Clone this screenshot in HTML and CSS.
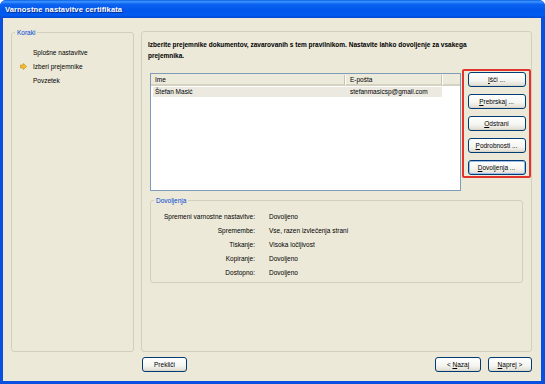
FILE: index.html
```html
<!DOCTYPE html>
<html lang="sl">
<head>
    <meta charset="UTF-8">
    <title>Varnostne nastavitve certifikata</title>
    <link rel="stylesheet" href="styles.css">
</head>
<body>

<div class="window">
    <div class="titlebar">Varnostne nastavitve certifikata</div>

    <div class="client">
        <div class="panes">
            <fieldset class="steps">
                <legend>Koraki</legend>
                <ul>
                    <li><span class="mark"></span>Splošne nastavitve</li>
                    <li class="current">
                        <span class="mark">
                            <svg width="7" height="7" viewBox="0 0 8 8">
                                <path d="M0.5 2.4 H3.8 V0.6 L7.5 4 L3.8 7.4 V5.6 H0.5 Z" fill="#f7c032" stroke="#c98d12" stroke-width="0.8"/>
                            </svg>
                        </span>Izberi prejemnike
                    </li>
                    <li><span class="mark"></span>Povzetek</li>
                </ul>
            </fieldset>

            <div class="page">
                <p class="intro">Izberite prejemnike dokumentov, zavarovanih s tem pravilnikom. Nastavite lahko dovoljenje za vsakega<br>prejemnika.</p>

                <div class="recipients">
                    <div class="list">
                        <div class="list-head">
                            <span>Ime</span>
                            <span>E-pošta</span>
                            <span></span>
                        </div>
                        <div class="list-row">
                            <span>Štefan Masić</span>
                            <span>stefanmasicsp@gmail.com</span>
                        </div>
                    </div>

                    <div class="actions">
                        <button><u>I</u>šči ...</button>
                        <button><u>P</u>rebrskaj ...</button>
                        <button><u>O</u>dstrani</button>
                        <button><u>P</u>odrobnosti ...</button>
                        <button class="focused"><u>D</u>ovoljenja ...</button>
                    </div>
                </div>

                <fieldset class="perms">
                    <legend>Dovoljenja</legend>
                    <div class="perm-grid">
                        <span>Spremeni varnostne nastavitve:</span><span>Dovoljeno</span>
                        <span>Spremembe:</span><span>Vse, razen izvlečenja strani</span>
                        <span>Tiskanje:</span><span>Visoka ločljivost</span>
                        <span>Kopiranje:</span><span>Dovoljeno</span>
                        <span>Dostopno:</span><span>Dovoljeno</span>
                    </div>
                </fieldset>
            </div>
        </div>

        <div class="footer">
            <button class="cancel">Prekliči</button>
            <div class="nav">
                <button class="back">&lt; <u>N</u>azaj</button>
                <button class="next"><u>N</u>aprej &gt;</button>
            </div>
        </div>
    </div>
</div>

</body>
</html>
```

FILE: styles.css
```css
html, body {
    margin: 0;
    padding: 0;
}
body {
    width: 545px;
    height: 384px;
    overflow: hidden;
    background-color: #ffffff;
    font-family: "Liberation Sans", Arial, sans-serif;
    font-size: 6.5px;
    color: #000;
}
.window {
    width: 545px;
    height: 384px;
    display: flex;
    flex-direction: column;
    background-color: #0a50e0;
    border-radius: 6px 6px 0 0;
    overflow: hidden;
}
.titlebar {
    flex: none;
    height: 18px;
    padding-left: 5px;
    display: flex;
    align-items: center;
    color: #fff;
    font-weight: bold;
    font-size: 7.6px;
    letter-spacing: 0.1px;
    text-shadow: 1px 1px #0b2a8a;
    background: linear-gradient(to bottom, #0b5fe8 0%, #3f97ff 10%, #0c64f2 22%, #0056ea 55%, #005bf0 85%, #0046cf 100%);
}
.client {
    flex: none;
    height: 363px;
    margin: 0 4px 3px 3px;
    background-color: #ece9d8;
    display: flex;
    flex-direction: column;
}

/* panes */
.panes {
    display: flex;
    gap: 7px;
    height: 324px;
    padding: 10px 9px 0 8px;
}
fieldset {
    margin: 0;
    padding: 0;
    border: 1px solid #d0d0bf;
    border-radius: 3px;
    min-width: 0;
}
legend {
    padding: 0 2px;
    margin-left: 3px;
    line-height: 9px;
    color: #0046d5;
}
.steps {
    width: 123px;
    box-sizing: border-box;
}
.steps ul {
    list-style: none;
    margin: 8px 0 0 0;
    padding: 0;
}
.steps li {
    display: flex;
    align-items: center;
    height: 14px;
}
.steps .mark {
    width: 21px;
    flex: none;
    display: flex;
    align-items: center;
}
.steps .mark svg {
    margin-left: 8px;
}

.page {
    flex: 1;
    margin-top: 3px;
    border: 1px solid #d0d0bf;
    border-radius: 3px;
}
.intro {
    margin: 0;
    padding: 7px 6px 0 6px;
    line-height: 11px;
    font-weight: bold;
    white-space: nowrap;
}

/* recipients */
.recipients {
    display: flex;
    align-items: flex-start;
    margin-top: 8px;
}
.list {
    width: 311px;
    height: 118px;
    margin: 4px 0 0 8px;
    box-sizing: border-box;
    border: 1px solid #7f9db9;
    background-color: #fff;
}
.list-head {
    display: grid;
    grid-template-columns: 194px 97px 1fr;
    height: 12px;
    box-sizing: border-box;
    background-color: #ebeadb;
    border-bottom: 2px solid #d6d2c2;
    line-height: 10px;
}
.list-head span {
    padding-left: 4px;
    border-right: 1px solid #c7c5b2;
    box-shadow: 1px 0 0 #fff;
    margin: 1px 0;
}
.list-head span:nth-child(2) {
    padding-left: 5px;
}
.list-head span:last-child {
    border-right: none;
    box-shadow: none;
}
.list-row {
    display: grid;
    grid-template-columns: 192px 97px;
    width: 289px;
    margin: 1px 0 0 2px;
    height: 10px;
    line-height: 10px;
    background-color: #ebe9e0;
}
.list-row span {
    padding-left: 2px;
}
.list-row span:nth-child(2) {
    padding-left: 5px;
}

.actions {
    width: 69px;
    height: 109px;
    margin-left: 1px;
    box-sizing: border-box;
    border: 2px solid #e3342c;
    border-radius: 2px;
    padding-top: 1px;
    display: flex;
    flex-direction: column;
    align-items: center;
    gap: 7px;
}
.actions button {
    width: 58px;
}

button {
    height: 15px;
    padding: 0;
    border: 1px solid #003c74;
    border-radius: 3px;
    background: linear-gradient(to bottom, #ffffff 0%, #f4f4f0 60%, #e4e1d6 90%, #d6d0c5 100%);
    font-family: "Liberation Sans", Arial, sans-serif;
    font-size: 6.5px;
    color: #000;
    line-height: 13px;
    text-align: center;
}
button.focused {
    box-shadow: inset 0 0 0 1px #9dbcec;
}

/* permissions */
.perms {
    width: 373px;
    box-sizing: border-box;
    margin: 5px 0 0 8px;
    padding: 4px 0 2px 0;
}
.perm-grid {
    display: grid;
    grid-template-columns: 104px 1fr;
    column-gap: 14px;
    grid-auto-rows: 14.2px;
    align-items: center;
}
.perm-grid span:nth-child(odd) {
    text-align: right;
}

/* footer */
.footer {
    display: flex;
    justify-content: space-between;
    margin-top: 5px;
    padding: 0 9px 0 139px;
}
.nav {
    display: flex;
    gap: 7px;
}
.cancel {
    width: 45px;
}
.back {
    width: 46px;
}
.next {
    width: 44px;
}
```
